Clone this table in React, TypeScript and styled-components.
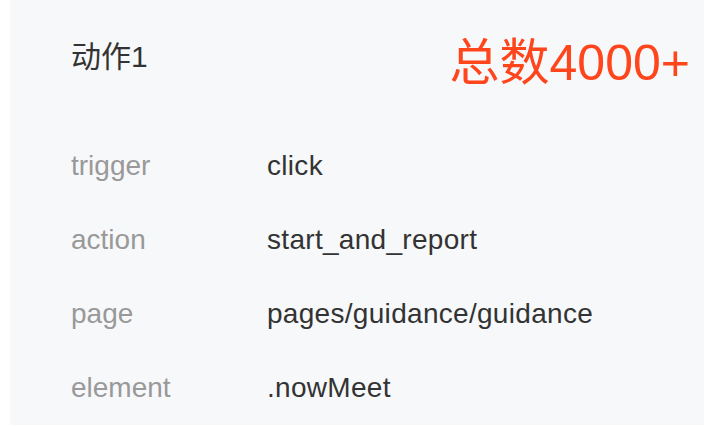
import styled, { createGlobalStyle } from 'styled-components'

const GlobalStyle = createGlobalStyle`
	html, body {
		margin: 0;
		padding: 0;
		background: #ffffff;
	}
	body {
		font-family: 'Liberation Sans', 'Noto Sans CJK SC', sans-serif;
	}
`

const Page = styled.div`
	width: 704px;
	height: 426px;
	padding-left: 10px;
	box-sizing: border-box;
	overflow: hidden;
`

const Card = styled.section`
	height: 425px;
	background-color: #f7f8fa;
	padding-left: 61px;
	padding-right: 14px;
	box-sizing: border-box;
`

const Header = styled.header`
	display: flex;
	justify-content: space-between;
	align-items: flex-start;
	padding-top: 38px;
	padding-bottom: 41px;
`

const Title = styled.h2`
	margin: 4px 0 0;
	font-size: 30px;
	line-height: 30px;
	font-weight: 400;
	color: #333333;
`

const Total = styled.span`
	font-size: 50px;
	line-height: 50px;
	color: #ff451c;
	white-space: nowrap;
`

const Row = styled.div`
	display: flex;
	height: 74px;
	line-height: 74px;
	font-size: 28px;
`

const Label = styled.span`
	width: 196px;
	flex-shrink: 0;
	color: #999999;
`

const Value = styled.span`
	color: #333333;
	letter-spacing: 0.3px;
`

const fields = [
	{ label: 'trigger', value: 'click' },
	{ label: 'action', value: 'start_and_report' },
	{ label: 'page', value: 'pages/guidance/guidance' },
	{ label: 'element', value: '.nowMeet' }
]

const App = () => {
	return (
		<>
			<GlobalStyle />
			<Page>
				<Card>
					<Header>
						<Title>动作1</Title>
						<Total>总数4000+</Total>
					</Header>
					{fields.map((f) => (
						<Row key={f.label}>
							<Label>{f.label}</Label>
							<Value>{f.value}</Value>
						</Row>
					))}
				</Card>
			</Page>
		</>
	)
}

export default App
